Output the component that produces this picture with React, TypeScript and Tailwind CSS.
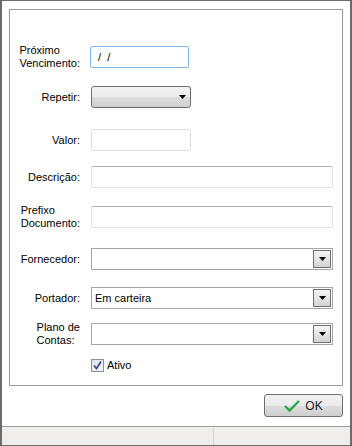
const font = { fontFamily: '"Liberation Sans", Arial, sans-serif' };

function Arrow() {
  return (
    <svg width="7" height="4" viewBox="0 0 7 4" className="block">
      <path d="M0 0 H7 L3.5 4 Z" fill="#000" />
    </svg>
  );
}

function Label({ children }: { children: React.ReactNode }) {
  return (
    <div className="w-[70px] shrink-0 flex justify-end">
      <div className="text-left leading-[13px]">{children}</div>
    </div>
  );
}

function Combo({ value }: { value?: string }) {
  return (
    <div className="ml-[11px] w-[242px] h-[22px] border border-[#a5a5a5] bg-white flex items-center justify-between pl-[3px] pr-px">
      <span>{value}</span>
      <div className="w-[18px] h-[18px] border border-[#6f6f6f] bg-gradient-to-b from-[#f7f7f7] to-[#d3d3d3] flex items-center justify-center">
        <Arrow />
      </div>
    </div>
  );
}

export default function App() {
  return (
    <div
      style={font}
      className="w-[352px] h-[446px] bg-white border-x-2 border-y border-[#6b6b6b] flex flex-col text-[11px] text-black"
    >
      <div className="ml-[7px] mt-[8px] w-[334px] h-[377px] border border-[#9a9a9a] flex flex-col">
        <div className="mt-[36px] h-[22px] flex items-center">
          <Label>
            Próximo
            <br />
            Vencimento:
          </Label>
          <div className="ml-[10px] w-[99px] h-[22px] border border-[#82b5e8] rounded-[2px] flex items-center pl-[7px]">
            /&nbsp;&nbsp;/
          </div>
        </div>

        <div className="mt-[18px] h-[22px] flex items-center">
          <Label>Repetir:</Label>
          <div className="ml-[11px] w-[100px] h-[22px] border border-[#707070] rounded-[3px] bg-[linear-gradient(#f2f2f2_0%,#ebebeb_50%,#dddddd_50%,#cfcfcf_100%)] flex items-center justify-end pr-[4px]">
            <Arrow />
          </div>
        </div>

        <div className="mt-[21px] h-[22px] flex items-center">
          <Label>Valor:</Label>
          <div className="ml-[11px] w-[100px] h-[22px] border border-[#dadde2] rounded-[2px] bg-white" />
        </div>

        <div className="mt-[15px] h-[22px] flex items-center">
          <Label>Descrição:</Label>
          <div className="ml-[11px] w-[242px] h-[22px] border border-[#dfe2e8] border-t-[#abadb3] rounded-[2px] bg-white" />
        </div>

        <div className="mt-[18px] h-[22px] flex items-center">
          <Label>
            Prefixo
            <br />
            Documento:
          </Label>
          <div className="ml-[11px] w-[242px] h-[22px] border border-[#dfe2e8] border-t-[#abadb3] rounded-[2px] bg-white" />
        </div>

        <div className="mt-[20px] h-[22px] flex items-center">
          <Label>Fornecedor:</Label>
          <Combo />
        </div>

        <div className="mt-[17px] h-[22px] flex items-center">
          <Label>Portador:</Label>
          <Combo value="Em carteira" />
        </div>

        <div className="mt-[14px] h-[22px] flex items-center">
          <Label>
            Plano de
            <br />
            Contas:
          </Label>
          <Combo />
        </div>

        <div className="mt-[14px] ml-[81px] h-[13px] flex items-center gap-[3px] leading-[13px]">
          <div className="w-[13px] h-[13px] border border-[#8e8f8f] bg-gradient-to-br from-[#dfe4ee] to-[#f6f7fa] flex items-center justify-center">
            <svg width="9" height="9" viewBox="0 0 9 9">
              <path d="M1 4.5 L3.5 7.5 L8 0.5" stroke="#3a4f8c" strokeWidth="1.8" fill="none" />
            </svg>
          </div>
          <span>Ativo</span>
        </div>
      </div>

      <div className="mt-[8px] ml-[262px] w-[79px] h-[23px] border border-[#707070] rounded-[3px] bg-[linear-gradient(#f2f2f2_0%,#ebebeb_50%,#dddddd_50%,#cfcfcf_100%)] flex items-center justify-center gap-[5px]">
        <svg width="16" height="12" viewBox="0 0 16 12">
          <path d="M1 6 L5.5 10.5 L15 1" stroke="#2aa44a" strokeWidth="2.4" fill="none" />
        </svg>
        <span className="text-[12px] text-[#1a1a1a]">OK</span>
      </div>

      <div className="mt-[9px] flex-1 border-t border-[#a0a0a0] bg-[#f0eded] flex">
        <div className="w-[212px] border-r border-[#d6d2d2]" />
      </div>
    </div>
  );
}
